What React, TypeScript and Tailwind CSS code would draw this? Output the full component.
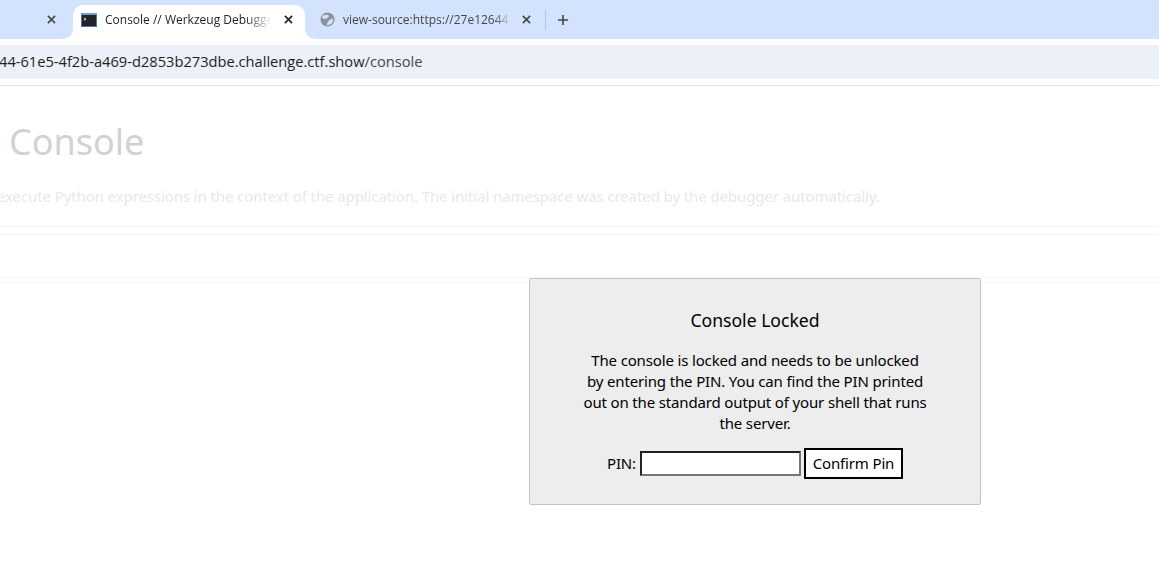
import React from 'react';

const sourceFont = "font-['Noto_Sans',sans-serif]";
const stripBlue = 'bg-[#d3e3fd]';

const CloseIcon = ({ className }: { className: string }) => (
  <svg width="10" height="10" viewBox="0 0 10 10" className={className}>
    <path d="M1 1L9 9M9 1L1 9" stroke="currentColor" strokeWidth="1.8" fill="none" />
  </svg>
);

const TerminalFavicon = () => (
  <svg width="16" height="16" viewBox="0 0 16 16" className="shrink-0">
    <rect x="0" y="1" width="16" height="14" fill="#4a79b0" />
    <rect x="0" y="1" width="16" height="2" fill="#6f9fd6" />
    <rect x="1" y="3" width="14" height="11" fill="#23232a" />
    <path d="M3 6L5 7.2L3 8.4" stroke="#e5e5e5" strokeWidth="1" fill="none" />
  </svg>
);

const GlobeFavicon = () => (
  <svg width="15" height="15" viewBox="0 0 16 16" className="shrink-0">
    <circle cx="8" cy="8" r="7.5" fill="#8f949a" />
    <path d="M3.5 2.8C5.5 4 7 3.5 8.5 3L9.5 5L7 7L4.5 7.5L2 6Z M13.5 6.5C12.5 8 10.5 8 9 9.5C8 10.5 8 12 7 14C9.5 14 12 13 13 11.5L14 9Z" fill="#d3e3fd" />
  </svg>
);

export default function App() {
  return (
    <div className="relative h-[571px] w-[1159px] overflow-hidden bg-white font-['Open_Sans',sans-serif]">
      {/* browser chrome */}
      <div className={`flex h-[39px] items-end ${stripBlue}`}>
        <div className="flex h-[34px] w-[73px] items-center justify-end pr-[17px] pb-[5px] text-[#444746]">
          <CloseIcon className="h-[9px] w-[9px]" />
        </div>
        <div className="relative flex h-[34px] w-[232px] items-center rounded-t-[10px] bg-white pb-[5px] pl-[8px]">
          <div className="absolute bottom-0 -left-[10px] h-[10px] w-[10px] bg-white">
            <div className={`h-full w-full rounded-br-[10px] ${stripBlue}`} />
          </div>
          <div className="absolute -right-[10px] bottom-0 h-[10px] w-[10px] bg-white">
            <div className={`h-full w-full rounded-bl-[10px] ${stripBlue}`} />
          </div>
          <TerminalFavicon />
          <span className="ml-[8px] w-[167px] overflow-hidden text-[12px] whitespace-nowrap text-[#1f1f1f] [mask-image:linear-gradient(to_right,black_84%,transparent)]">
            Console // Werkzeug Debugger
          </span>
          <CloseIcon className="ml-[12px] h-[9px] w-[9px] text-[#1f1f1f]" />
        </div>
        <div className="flex h-[34px] items-center pb-[5px] pl-[15px]">
          <GlobeFavicon />
          <span className="ml-[8px] w-[168px] overflow-hidden text-[12px] whitespace-nowrap text-[#444746] [mask-image:linear-gradient(to_right,black_90%,transparent)]">
            view-source:https://27e12644
          </span>
          <CloseIcon className="ml-[11px] h-[9px] w-[9px] text-[#444746]" />
          <div className="ml-[14px] h-[20px] w-px bg-[#a8c7fa]" />
          <svg width="12" height="12" viewBox="0 0 12 12" className="ml-[11px] text-[#444746]">
            <path d="M6 1V11M1 6H11" stroke="currentColor" strokeWidth="1.6" fill="none" />
          </svg>
        </div>
      </div>

      {/* address bar */}
      <div className="flex h-[47px] items-start border-b border-[#e2e2e2] bg-white pt-[6px]">
        <div className="flex h-[34px] w-full items-center overflow-hidden bg-[#ebf0f9] text-[14.66px] whitespace-nowrap text-[#1f1f1f]">
          <span className="-ml-px">44-61e5-4f2b-a469-d2853b273dbe.challenge.ctf.show</span>
          <span className="text-[#474747]">/console</span>
        </div>
      </div>

      {/* dimmed page */}
      <div className={`${sourceFont} overflow-hidden whitespace-nowrap`}>
        <h1 className="mt-[31px] ml-[9px] h-[50px] text-[36px] leading-[50px] font-normal text-[#d2d2d2]">Console</h1>
        <p className="mt-[18px] -ml-[3px] h-[22px] text-[15px] leading-[22px] tracking-[-0.1px] text-[#e8e8e8]">
          execute Python expressions in the context of the application. The initial namespace was created by the debugger automatically.
        </p>
        <div className="mt-[19px] h-[9px] border-y border-[#f5f5f5]" />
        <div className="mt-[42px] h-[6px] border-y border-[#f7f7f7]" />
      </div>

      {/* PIN prompt over the page */}
      <div className={`${sourceFont} absolute top-[278px] left-[529px] flex h-[227px] w-[452px] flex-col items-center rounded-[2px] border border-[#c4c4c4] bg-[#ededed] text-black`}>
        <h3 className="mt-[29px] text-[17.6px] leading-[24px] font-normal">Console Locked</h3>
        <p className="mt-[18px] w-[346px] text-center text-[15px] leading-[21px] tracking-[-0.15px]">
          The console is locked and needs to be unlocked by entering the PIN. You can find the PIN printed out on the standard output of your shell that runs the server.
        </p>
        <div className="mt-[14px] flex items-center text-[15px] tracking-[-0.15px]">
          <span>PIN:</span>
          <input
            type="text"
            className="ml-[4px] h-[25px] w-[161px] border-2 border-t-[#222222] border-r-[#767676] border-b-[#767676] border-l-[#222222] bg-white"
          />
          <button className="ml-[3px] h-[31px] w-[99px] border-2 border-black bg-white text-[15px] tracking-[-0.15px]">Confirm Pin</button>
        </div>
      </div>
    </div>
  );
}
